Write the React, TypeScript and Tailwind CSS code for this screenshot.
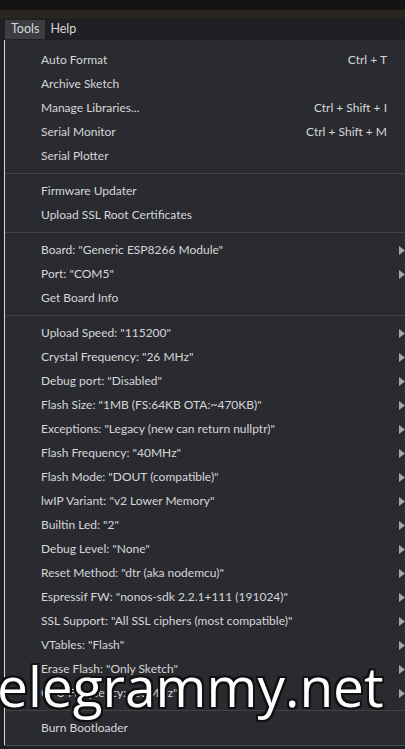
import { Fragment } from 'react'

type Item = { label: string; shortcut?: string; sub?: boolean }

const groups: Item[][] = [
  [
    { label: 'Auto Format', shortcut: 'Ctrl + T' },
    { label: 'Archive Sketch' },
    { label: 'Manage Libraries...', shortcut: 'Ctrl + Shift + I' },
    { label: 'Serial Monitor', shortcut: 'Ctrl + Shift + M' },
    { label: 'Serial Plotter' },
  ],
  [{ label: 'Firmware Updater' }, { label: 'Upload SSL Root Certificates' }],
  [
    { label: 'Board: "Generic ESP8266 Module"', sub: true },
    { label: 'Port: "COM5"', sub: true },
    { label: 'Get Board Info' },
  ],
  [
    { label: 'Upload Speed: "115200"', sub: true },
    { label: 'Crystal Frequency: "26 MHz"', sub: true },
    { label: 'Debug port: "Disabled"', sub: true },
    { label: 'Flash Size: "1MB (FS:64KB OTA:~470KB)"', sub: true },
    { label: 'Exceptions: "Legacy (new can return nullptr)"', sub: true },
    { label: 'Flash Frequency: "40MHz"', sub: true },
    { label: 'Flash Mode: "DOUT (compatible)"', sub: true },
    { label: 'lwIP Variant: "v2 Lower Memory"', sub: true },
    { label: 'Builtin Led: "2"', sub: true },
    { label: 'Debug Level: "None"', sub: true },
    { label: 'Reset Method: "dtr (aka nodemcu)"', sub: true },
    { label: 'Espressif FW: "nonos-sdk 2.2.1+111 (191024)"', sub: true },
    { label: 'SSL Support: "All SSL ciphers (most compatible)"', sub: true },
    { label: 'VTables: "Flash"', sub: true },
    { label: 'Erase Flash: "Only Sketch"', sub: true },
    { label: 'CPU Frequency: "80MHz"', sub: true },
  ],
  [{ label: 'Burn Bootloader' }],
]

function MenuRow({ item }: { item: Item }) {
  return (
    <div className="flex h-6 items-center pl-[36px] pr-[18px]">
      <span className="flex-1 whitespace-nowrap">{item.label}</span>
      {item.shortcut && <span className="whitespace-nowrap">{item.shortcut}</span>}
      {item.sub && (
        <svg width="6" height="9" viewBox="0 0 6 9" className="mr-[-18px] ml-auto">
          <path d="M0 0 L6 4.5 L0 9 Z" fill="#a8a8ac" />
        </svg>
      )}
    </div>
  )
}

export default function App() {
  return (
    <div
      className="relative h-[749px] w-[405px] overflow-hidden bg-[#1e1f22] text-[12px] text-[#d6d6d8]"
      style={{ fontFamily: 'Lato, "Open Sans", sans-serif' }}
    >
      {/* window title strip */}
      <div className="h-[10px] bg-[#141414]" />
      <div className="h-[8px] bg-[#2a2621]" />

      {/* menu bar */}
      <div className="flex h-[22px] items-center bg-[#1f2023] pl-[5px] text-[12.5px]">
        <span className="flex h-[19px] items-center bg-[#3b3d42] px-[6px]">Tools</span>
        <span className="px-[5px]">Help</span>
      </div>

      {/* dropdown */}
      <div className="ml-[4px] border-l border-[#d9d9d9] bg-[#2a2b30] pt-[8px] pb-[5px]">
        {groups.map((g, i) => (
          <Fragment key={i}>
            {i > 0 && <div className="mt-[5px] mb-[5px] h-px bg-[#414247]" />}
            {g.map((item) => (
              <MenuRow key={item.label} item={item} />
            ))}
          </Fragment>
        ))}
      </div>
      <div className="ml-[4px] h-px bg-[#4a4b50]" />

      {/* watermark */}
      <div
        className="absolute left-[-3px] top-[658px] whitespace-nowrap text-[55px] font-medium leading-none text-white"
        style={{
          fontFamily: '"Open Sans", sans-serif',
          textShadow:
            '2px 0 #111, -2px 0 #111, 0 2px #111, 0 -2px #111, 2px 2px #111, -2px -2px #111, 2px -2px #111, -2px 2px #111',
        }}
      >
        elegrammy.net
      </div>
    </div>
  )
}
